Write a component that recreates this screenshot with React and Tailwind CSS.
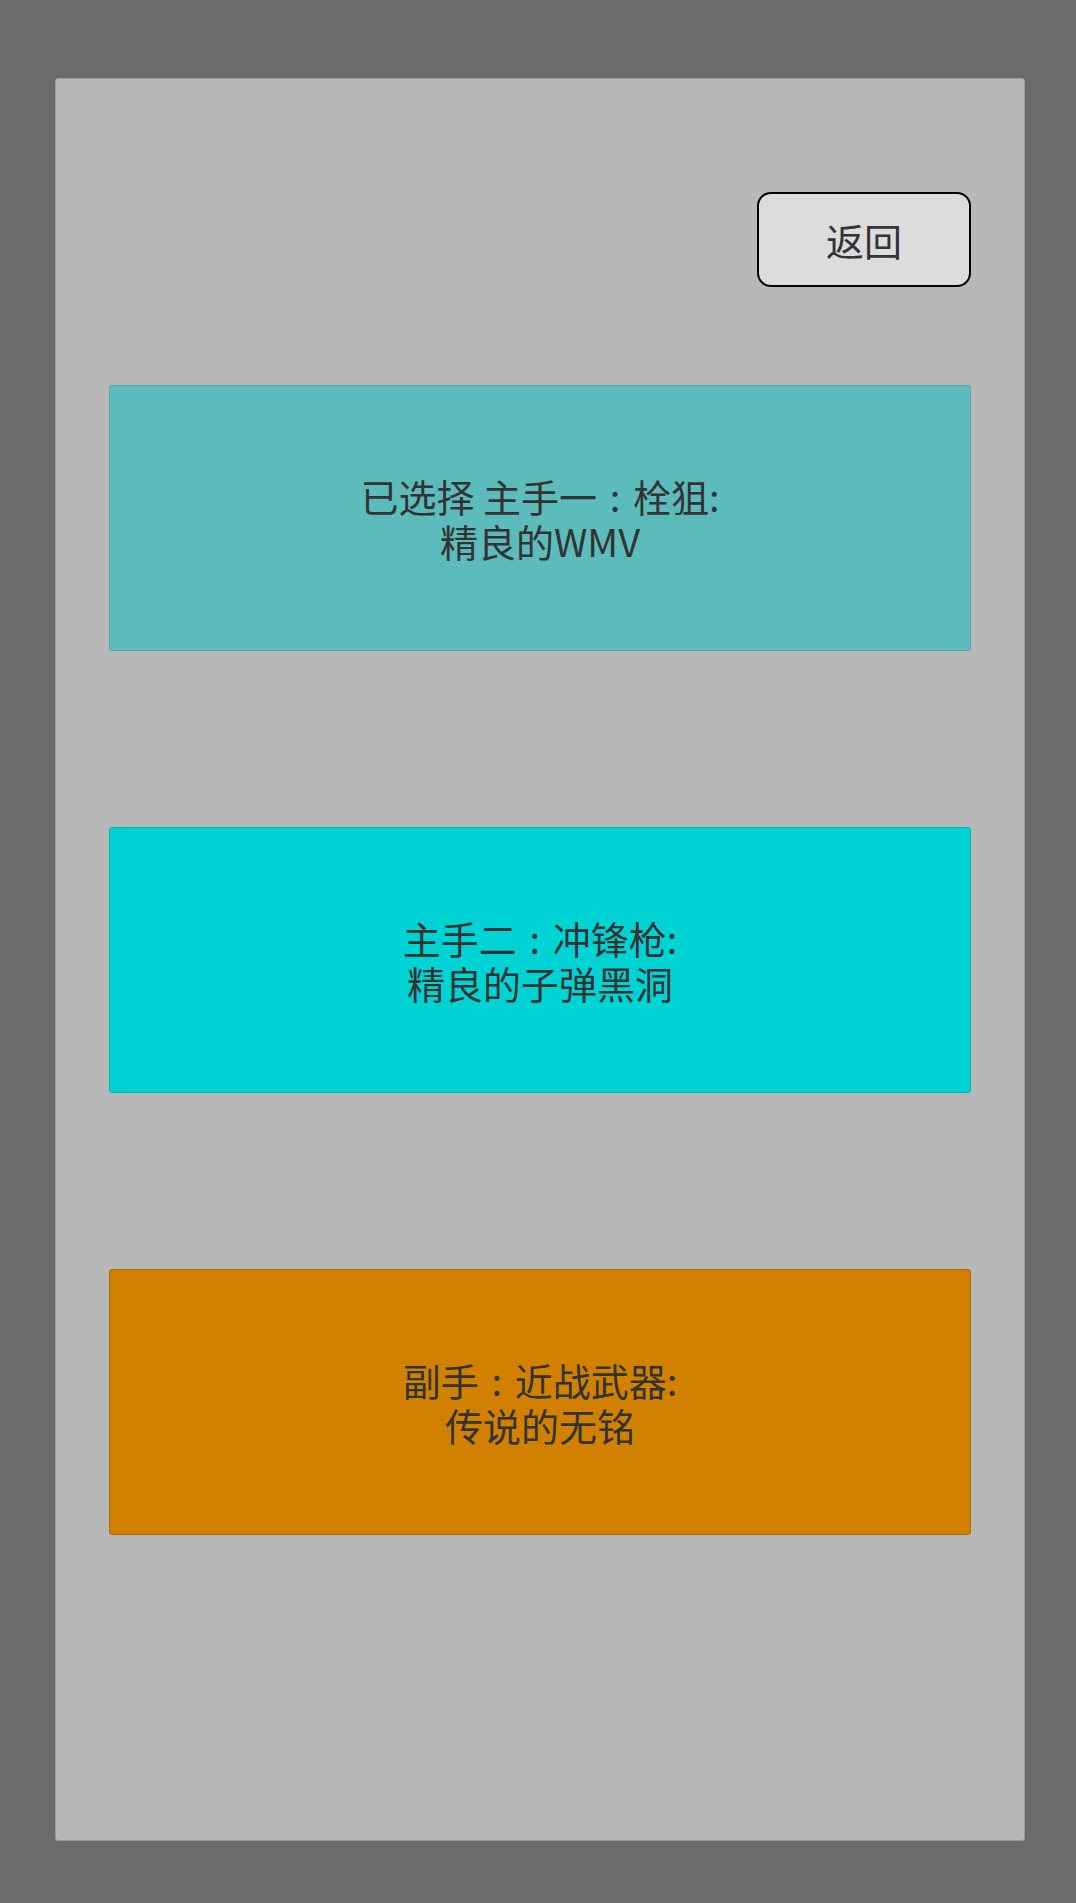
const cards = [
    { lines: ["已选择 主手一\u2004:\u2004栓狙:", "精良的WMV"], cls: "bg-[#5bbcbb] border-[#4fa9a8]" },
    { lines: ["主手二\u2004:\u2004冲锋枪:", "精良的子弹黑洞"], cls: "bg-[#00d3d4] border-[#00b5b6]" },
    { lines: ["副手\u2004:\u2004近战武器:", "传说的无铭"], cls: "bg-[#d18000] border-[#a86a10]" },
];

export default function App() {
    return (
        <div
            className="min-h-[1903px] bg-[#6b6b6b] pt-[78px]"
            style={{ fontFamily: '"Noto Sans CJK SC", "Noto Sans", sans-serif' }}
        >
            <div className="ml-[55px] w-[970px] h-[1763px] bg-[#b8b8b8] border border-[#9a9a9a] rounded-[3px] px-[53px] pt-[113px]">
                <div className="flex justify-end">
                    <button className="w-[214px] h-[95px] bg-[#dcdcdc] border-2 border-black rounded-[14px] text-[38px] text-[#333] leading-none">
                        返回
                    </button>
                </div>

                <div className="mt-[98px] flex flex-col gap-[176px]">
                    {cards.map((c, i) => (
                        <div
                            key={i}
                            className={`h-[266px] border rounded-[3px] flex items-center justify-center ${c.cls}`}
                        >
                            <p className="text-center text-[38px] leading-[45px] text-[#333] whitespace-pre">
                                {c.lines[0]}
                                <br />
                                {c.lines[1]}
                            </p>
                        </div>
                    ))}
                </div>
            </div>
        </div>
    );
}
